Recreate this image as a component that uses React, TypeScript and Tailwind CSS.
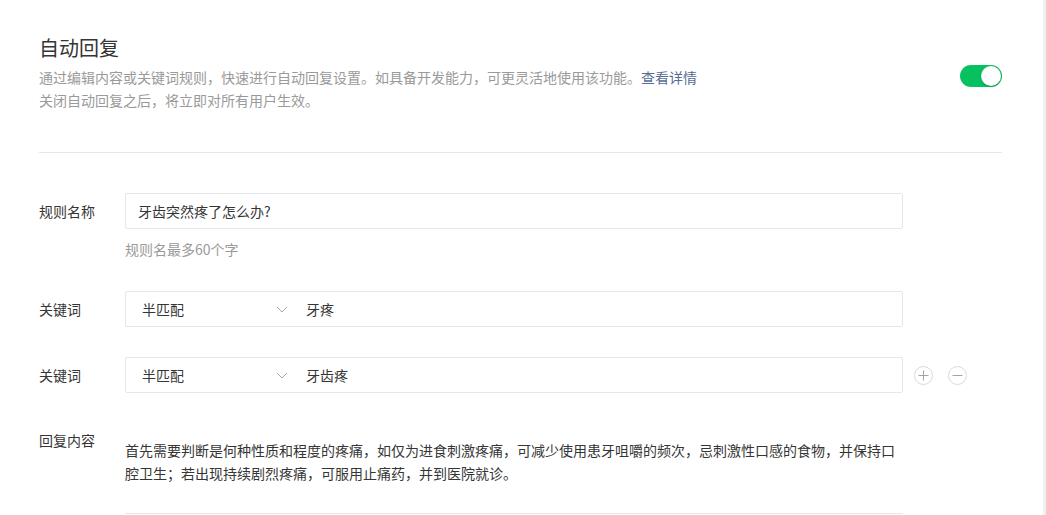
import React from "react";

function Chevron() {
  return (
    <svg width="12" height="7" viewBox="0 0 12 7" fill="none">
      <path d="M1 1l5 5 5-5" stroke="#a7a7a7" strokeWidth="1" />
    </svg>
  );
}

function CircleBtn({ minus }: { minus?: boolean }) {
  return (
    <div className="w-[19px] h-[19px] rounded-full border border-[#d9dadc] flex items-center justify-center">
      <svg width="11" height="11" viewBox="0 0 11 11">
        <path d="M0.5 5.5h10" stroke="#a3a3a3" strokeWidth="1" />
        {!minus && <path d="M5.5 0.5v10" stroke="#a3a3a3" strokeWidth="1" />}
      </svg>
    </div>
  );
}

function KeywordRow({ value, extra }: { value: string; extra?: boolean }) {
  return (
    <div className="flex items-center">
      <div className="w-[86px] shrink-0 text-[14px] text-[#353535]">关键词</div>
      <div className="w-[778px] h-[36px] border border-[#e4e8eb] rounded-[2px] flex items-center">
        <div className="w-[172px] shrink-0 flex items-center justify-between pl-[16px] pr-[10px] text-[14px] text-[#353535]">
          <span>半匹配</span>
          <Chevron />
        </div>
        <div className="pl-[8px] text-[14px] text-[#353535]">{value}</div>
      </div>
      {extra && (
        <div className="flex items-center gap-[15px] ml-[11px]">
          <CircleBtn />
          <CircleBtn minus />
        </div>
      )}
    </div>
  );
}

export default function App() {
  return (
    <div
      className="w-full min-h-screen bg-white flex"
      style={{ fontFamily: '"Noto Sans CJK SC", "Noto Sans", sans-serif' }}
    >
      <div className="flex-1 pl-[39px] pr-[41px] pt-[34px]">
        <div className="flex items-center justify-between">
          <div>
            <div className="text-[20px] leading-[28px] text-[#353535]">自动回复</div>
            <div className="mt-[4px] text-[14px] leading-[23px] text-[#9a9a9a]">
              <div>
                通过编辑内容或关键词规则，快速进行自动回复设置。如具备开发能力，可更灵活地使用该功能。
                <span className="text-[#576b95]">查看详情</span>
              </div>
              <div>关闭自动回复之后，将立即对所有用户生效。</div>
            </div>
          </div>
          <div className="w-[42px] h-[22px] rounded-full bg-[#07c160] flex items-center justify-end pr-[1px] mt-[5px]">
            <div className="w-[20px] h-[20px] rounded-full bg-white shadow-[0_1px_2px_rgba(0,0,0,0.25)]" />
          </div>
        </div>

        <div className="mt-[40px] h-px bg-[#e7e7eb]" />

        <div className="mt-[40px] flex items-center">
          <div className="w-[86px] shrink-0 text-[14px] text-[#353535]">规则名称</div>
          <div className="w-[778px] h-[36px] border border-[#e4e8eb] rounded-[2px] flex items-center pl-[12px] text-[14px] text-[#353535]">
            牙齿突然疼了怎么办?
          </div>
        </div>
        <div className="ml-[86px] mt-[9px] text-[14px] leading-[22px] text-[#9a9a9a]">规则名最多60个字</div>

        <div className="mt-[31px]">
          <KeywordRow value="牙疼" />
        </div>
        <div className="mt-[30px]">
          <KeywordRow value="牙齿疼" extra />
        </div>

        <div className="mt-[36px] flex items-start">
          <div className="w-[86px] shrink-0 text-[14px] leading-[22px] text-[#353535]">回复内容</div>
          <div className="w-[778px]">
            <div className="mt-[10px] text-[14px] leading-[23px] text-[#353535]">
              首先需要判断是何种性质和程度的疼痛，如仅为进食刺激疼痛，可减少使用患牙咀嚼的频次，忌刺激性口感的食物，并保持口腔卫生；若出现持续剧烈疼痛，可服用止痛药，并到医院就诊。
            </div>
            <div className="mt-[28px] h-px bg-[#e7e7eb]" />
          </div>
        </div>
      </div>
      <div className="w-[3px] shrink-0 bg-[#eff0f2]" />
    </div>
  );
}
